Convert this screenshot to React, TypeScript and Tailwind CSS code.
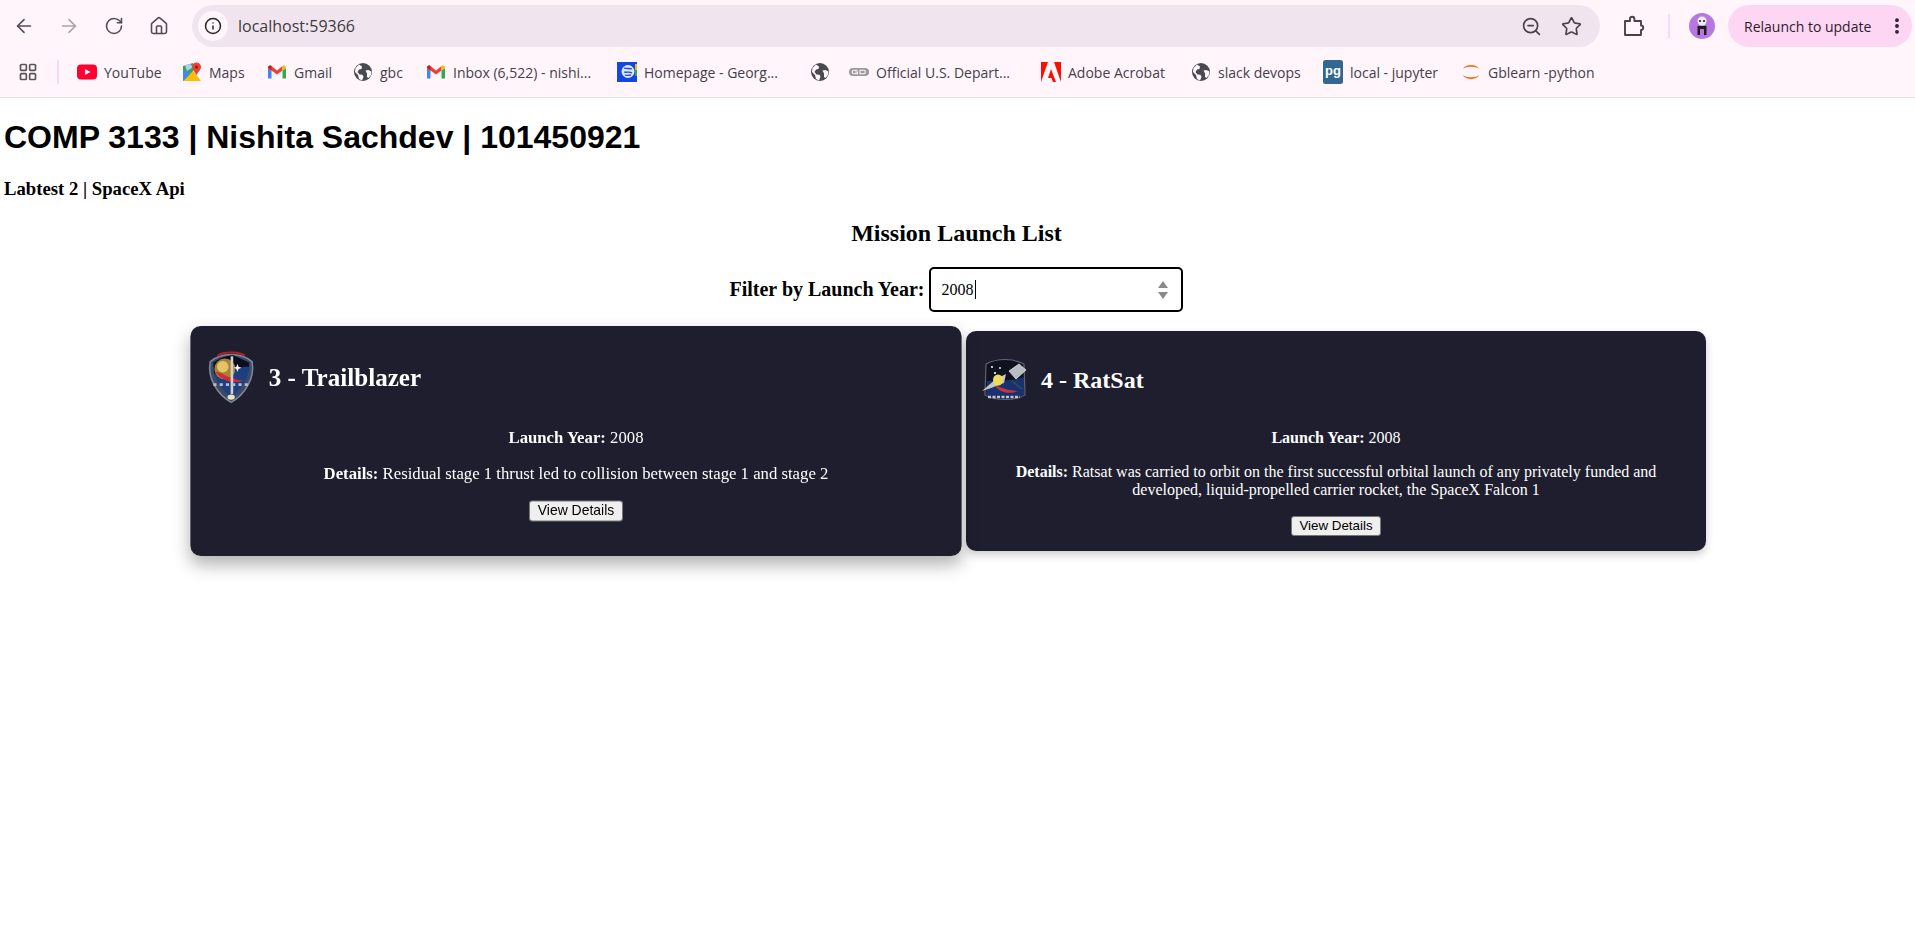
import { ArrowLeft, ArrowRight, RotateCw, Home, ZoomOut, Star, Info, LayoutGrid, MoreVertical } from 'lucide-react'

const chromeFont = "font-['Open_Sans','Noto_Sans',sans-serif]"

function Globe() {
  return (
    <svg width="20" height="20" viewBox="0 0 20 20">
      <circle cx="10" cy="10" r="9" fill="#474a4f" />
      <path d="M6 2.5 9 4.5 8.5 7 6 7.5 4.5 10 6.5 12.5 9.5 12.8 10.5 15 9 18.5 6 17 5 13 2 10 2.5 6Z" fill="#fff6fb" />
      <path d="M12.5 8.5 15.5 8 18.5 9.5 18 13 15.5 16 14 15 14 11.5Z" fill="#fff6fb" />
    </svg>
  )
}

function YouTube() {
  return (
    <svg width="20" height="20" viewBox="0 0 20 20">
      <rect x="0" y="2.5" width="20" height="15" rx="4" fill="#fe0032" />
      <path d="M8 7 13.5 10 8 13Z" fill="#fff" />
    </svg>
  )
}

function Maps() {
  return (
    <svg width="20" height="20" viewBox="0 0 20 20">
      <path d="M1 4 11 1 11 19 1 19Z" fill="#35a853" />
      <path d="M1 19 11 9 19 19Z" fill="#fbbc04" />
      <path d="M1 19 8 12 4 8 1 11Z" fill="#4285f4" />
      <path d="M3 3 8 2 11 5 5 9Z" fill="#aecbfa" />
      <path d="M14.5 0.5a4.5 4.5 0 0 1 4.5 4.5c0 3-3 4.5-4.5 8.5-1.5-4-4.500-5.500-4.500-8.500a4.500 4.500 0 0 1 4.500-4.500Z" fill="#ea4335" />
      <circle cx="14.500" cy="5" r="1.600" fill="#a31515" />
    </svg>
  )
}

function Gmail() {
  return (
    <svg width="20" height="20" viewBox="0 0 20 20">
      <path d="M1 6V16.500H4.500V8.500Z" fill="#4285f4" />
      <path d="M19 6V16.500H15.500V8.500Z" fill="#34a853" />
      <path d="M1 6C1 3.500 3 3 4.500 4L10 8.500 15.500 4 15.500 8.500 10 12.500 4.500 8.500 1 6Z" fill="#ea4335" />
      <path d="M15.500 4C17 3 19 3.500 19 6L15.500 8.500Z" fill="#fbbc04" />
      <path d="M1 6 4.500 8.500V4C3 3 1 3.500 1 6Z" fill="#c5221f" />
    </svg>
  )
}

function GeorgeBrown() {
  return (
    <svg width="20" height="20" viewBox="0 0 20 20">
      <rect width="20" height="20" fill="#1546e0" />
      <circle cx="11" cy="9.500" r="6.500" fill="#dbe6fb" />
      <path d="M7 6c3 1 5 0 8 1M7 10c3 1 5-1 8 1M8 13c2 1 4 0 6 0" stroke="#1546e0" strokeWidth="1.300" fill="none" />
      <rect x="18" y="2" width="2" height="6" fill="#f0b429" />
      <rect x="18" y="8" width="2" height="6" fill="#39a845" />
    </svg>
  )
}

function GdIcon() {
  return (
    <svg width="20" height="20" viewBox="0 0 20 20">
      <rect x="0" y="6" width="20" height="8" rx="4" fill="#9a9a9a" />
      <path d="M8.500 8.200H5a1.800 1.800 0 0 0 0 3.600h3.500V10H6" stroke="#fff6fb" strokeWidth="1.100" fill="none" />
      <path d="M11 8.200h3.500a1.800 1.800 0 0 1 0 3.600H11Z" stroke="#fff6fb" strokeWidth="1.100" fill="none" />
    </svg>
  )
}

function Adobe() {
  return (
    <svg width="20" height="20" viewBox="0 0 20 20">
      <path d="M0 0H7L0 20Z" fill="#fa0f00" />
      <path d="M13 0H20V20Z" fill="#fa0f00" />
      <path d="M10 7 15 20H12L10.500 16H7Z" fill="#fa0f00" />
    </svg>
  )
}

function Pg() {
  return (
    <svg width="20" height="24" viewBox="0 0 20 24">
      <rect width="20" height="24" rx="2.500" fill="#336791" />
      <text x="10" y="15" textAnchor="middle" fontSize="13" fontWeight="700" fill="#fff" fontFamily="Liberation Sans, sans-serif">pg</text>
    </svg>
  )
}

function Jupyter() {
  return (
    <svg width="20" height="20" viewBox="0 0 20 20">
      <path d="M2 7C4 1.500 16 1.500 18 7 15 4 5 4 2 7Z" fill="#f37726" />
      <path d="M2 13C4 18.500 16 18.500 18 13 15 16 5 16 2 13Z" fill="#f37726" />
    </svg>
  )
}

const bookmarks = [
  { icon: <YouTube />, label: 'YouTube', width: 'w-[56px]' },
  { icon: <Maps />, label: 'Maps', width: 'w-[36px]' },
  { icon: <Gmail />, label: 'Gmail', width: 'w-[37px]' },
  { icon: <Globe />, label: 'gbc', width: 'w-[24px]' },
  { icon: <Gmail />, label: 'Inbox (6,522) - nishi...', width: 'w-[142px]' },
  { icon: <GeorgeBrown />, label: 'Homepage - Georg...', width: 'w-[144px]' },
  { icon: <Globe />, label: '', width: 'w-0', extra: '-mr-[3px]' },
  { icon: <GdIcon />, label: 'Official U.S. Depart...', width: 'w-[143px]' },
  { icon: <Adobe />, label: 'Adobe Acrobat', width: 'w-[101px]' },
  { icon: <Globe />, label: 'slack devops', width: 'w-[83px]' },
  { icon: <Pg />, label: 'local - jupyter', width: 'w-[89px]' },
  { icon: <Jupyter />, label: 'Gblearn -python', width: 'w-[110px]' },
]

function Toolbar() {
  return (
    <div className={`${chromeFont} bg-[#fff5fb] border-b border-[#e6e1e5] h-[98px] text-[#45404a]`}>
      <div className="flex items-center h-[52px] pl-px">
        <div className="w-[45px] flex justify-center"><ArrowLeft size={22} strokeWidth={1.8} color="#5a4a55" /></div>
        <div className="w-[45px] flex justify-center"><ArrowRight size={22} strokeWidth={1.8} color="#aaa3a8" /></div>
        <div className="w-[45px] flex justify-center"><RotateCw size={20} strokeWidth={1.9} color="#5a4a55" /></div>
        <div className="w-[45px] flex justify-center"><Home size={20} strokeWidth={1.9} color="#5a4a55" /></div>
        <div className="ml-[11px] w-[1408px] h-[42px] rounded-full bg-[#f0e5ee] flex items-center pl-[6px] pr-[18px]">
          <div className="w-[30px] h-[30px] rounded-full bg-[#fff5fb] flex items-center justify-center">
            <Info size={18} strokeWidth={2} color="#2b2428" />
          </div>
          <span className="ml-[10px] text-[16px] text-[#3f3a40]">localhost:59366</span>
          <div className="ml-auto flex items-center gap-[19px]">
            <ZoomOut size={21} strokeWidth={1.9} color="#4a4248" />
            <Star size={21} strokeWidth={1.9} color="#4a4248" />
          </div>
        </div>
        <svg className="ml-[22px]" width="24" height="24" viewBox="0 0 24 24" fill="none" stroke="#4a4248" strokeWidth="1.900">
          <path d="M3 7H8V5a2.200 2.200 0 0 1 4.400 0V7H19V11.500a2.200 2.200 0 0 1 0 4.400V21H3V7Z" strokeLinejoin="round" />
        </svg>
        <div className="ml-[22px] w-[2px] h-[24px] bg-[#fdd6f3]" />
        <div className="ml-[19px] w-[26px] h-[26px] rounded-full bg-[#b678e0] flex items-center justify-center">
          <svg width="16" height="22" viewBox="0 0 16 22">
            <circle cx="8" cy="6" r="4.500" fill="#eeeeee" />
            <circle cx="6" cy="6" r="1.100" fill="#222" />
            <circle cx="10" cy="6" r="1.100" fill="#222" />
            <path d="M3.500 11H12.500V20H10V14H6V20H3.500Z" fill="#1d1d1d" />
          </svg>
        </div>
        <div className="ml-[13px] w-[184px] h-[42px] rounded-full bg-[#fdd6f3] flex items-center pl-[16px] text-[14px] text-[#2f1a2c] whitespace-nowrap">
          Relaunch to update
          <MoreVertical size={20} strokeWidth={2.600} color="#2f1a2c" className="ml-auto mr-[5px]" />
        </div>
      </div>
      <div className="flex items-center h-[40px]">
        <LayoutGrid size={20} strokeWidth={2} color="#5a5558" className="ml-[18px]" />
        <div className="ml-[19px] w-[2px] h-[24px] bg-[#fdd6f3]" />
        <div className="ml-[18px] flex items-center gap-[22px] text-[14px] whitespace-nowrap">
          {bookmarks.map((b, i) => (
            <div key={i} className={`flex items-center gap-[7px] ${b.extra ?? ''}`}>
              {b.icon}
              {b.label && <span className={`${b.width} block`}>{b.label}</span>}
            </div>
          ))}
        </div>
      </div>
    </div>
  )
}

function TrailblazerPatch() {
  return (
    <svg className="blur-[0.4px]" width="46" height="50" viewBox="0 0 46 50">
      <path d="M3 10C14 1 32 1 43 10 46 26 36 42 23 49 10 42 0 26 3 10Z" fill="#3c4a66" stroke="#7e8798" strokeWidth="1.500" />
      <path d="M6 11C16 4 30 4 40 11 42 22 34 36 23 44 12 36 4 22 6 11Z" fill="#1b3f80" />
      <path d="M6 11C14 5 23 4 25 4L40 11 40 15C30 14 26 20 7 22Z" fill="#0b0d1d" />
      <circle cx="17" cy="17" r="10" fill="#a98333" />
      <circle cx="15" cy="15" r="5.500" fill="#e5c468" />
      <path d="M8 20C15 20 22 28 35 28 24 32 14 28 8 20Z" fill="#d42a35" />
      <rect x="22.500" y="5" width="2.500" height="36" fill="#cfcfcf" />
      <path d="M29 12 30 15 33 16 30 17 29 20 28 17 25.500 16 28 15Z" fill="#f4f4f4" />
      <path d="M6 32H40" stroke="#b9bdc6" strokeWidth="2.500" strokeDasharray="3 3" />
      <ellipse cx="23" cy="44" rx="3.500" ry="2.500" fill="#eee6c0" />
      <path d="M10 4C18 0 28 0 36 4" stroke="#b01e28" strokeWidth="2" fill="none" />
    </svg>
  )
}

function RatSatPatch() {
  return (
    <svg className="blur-[0.3px]" width="46" height="46" viewBox="0 0 46 46">
      <path d="M4 7C15 1 31 1 42 7L43 38C32 44 14 44 3 38Z" fill="#10131f" stroke="#5e6472" strokeWidth="1.200" />
      <path d="M5 24C14 24 32 24 42 20L42 38C32 43 14 43 4 38Z" fill="#1a3170" />
      <circle cx="10" cy="10" r="1" fill="#fff" />
      <circle cx="13" cy="16" r="1.100" fill="#fff" />
      <circle cx="18" cy="11" r="0.900" fill="#fff" />
      <path d="M27 14 37 7 44 13 34 22Z" fill="#b9bcc0" stroke="#dfe1e4" strokeWidth="0.800" />
      <path d="M0 34 14 22 24 17 22 26 9 31Z" fill="#c9c9b8" />
      <ellipse cx="16" cy="23" rx="5" ry="5.500" fill="#eedc58" />
      <path d="M13 29C20 30 26 34 36 34 26 38 18 35 13 29Z" fill="#c9343f" />
      <path d="M30 24 40 32" stroke="#1f5e4c" strokeWidth="1.500" />
      <path d="M6 40H38" stroke="#c4c4c4" strokeWidth="2.500" strokeDasharray="3 1.500" />
    </svg>
  )
}

type Launch = { num: string; name: string; year: string; details: string; patch: React.ReactNode; hovered?: boolean }

const launches: Launch[] = [
  {
    num: '3',
    name: 'Trailblazer',
    year: '2008',
    details: 'Residual stage 1 thrust led to collision between stage 1 and stage 2',
    patch: <TrailblazerPatch />,
    hovered: true,
  },
  {
    num: '4',
    name: 'RatSat',
    year: '2008',
    details: 'Ratsat was carried to orbit on the first successful orbital launch of any privately funded and developed, liquid-propelled carrier rocket, the SpaceX Falcon 1',
    patch: <RatSatPatch />,
  },
]

function LaunchCard({ launch }: { launch: Launch }) {
  return (
    <div
      className={
        launch.hovered
          ? 'w-[738px] bg-[#1e1e2e] text-white rounded-[10px] px-[18px] pt-[26px] pb-[15px] scale-[1.045] shadow-[0_8px_16px_rgba(0,0,0,0.3)]'
          : 'w-[740px] bg-[#1e1e2e] text-white rounded-[10px] px-[18px] pt-[26px] pb-[15px] shadow-[0_4px_8px_rgba(0,0,0,0.2)]'
      }
    >
      <div className="flex items-center gap-[13px] h-[46px] -ml-[2px]">
        {launch.patch}
        <h2 className="text-[24px] font-bold">{launch.num} - {launch.name}</h2>
      </div>
      <p className="mt-[26px] text-center text-[16px] leading-[18px]"><strong>Launch Year:</strong> {launch.year}</p>
      <p className="mt-[16px] text-center text-[16px] leading-[18px]"><strong>Details:</strong> {launch.details}</p>
      <div className="mt-[17px] flex justify-center">
        <button className="h-[20px] px-[7px] bg-[#efefef] border border-[#767676] rounded-[3px] text-[13.33px] leading-none text-black font-['Liberation_Sans',sans-serif]">View Details</button>
      </div>
    </div>
  )
}

export default function App() {
  return (
    <div className="min-h-[925px] bg-white font-['Liberation_Serif',serif] text-black">
      <Toolbar />
      <h1 className="mt-[21px] ml-[4px] text-[32px] leading-[37px] font-bold font-['Liberation_Sans',sans-serif]">COMP 3133 | Nishita Sachdev | 101450921</h1>
      <h3 className="mt-[22px] ml-[4px] text-[18.72px] leading-[21px] font-bold">Labtest 2 | SpaceX Api</h3>
      <h2 className="mt-[21px] pr-[2px] text-center text-[24px] leading-[27px] font-bold">Mission Launch List</h2>
      <div className="mt-[20px] pr-[3px] flex items-center justify-center gap-[4px]">
        <label className="text-[20px] leading-[23px] font-bold">Filter by Launch Year:</label>
        <div className="relative w-[254px] h-[45px] border-2 border-black rounded-[5px] flex items-center pl-[11px] text-[16px]">
          2008
          <span className="ml-px w-px h-[19px] bg-black" />
          <svg className="absolute right-[12px] top-[11px]" width="12" height="20" viewBox="0 0 12 20">
            <path d="M6 1 11 8H1Z" fill="#8a8a8a" />
            <path d="M6 19 11 12H1Z" fill="#8a8a8a" />
          </svg>
        </div>
      </div>
      <div className="mt-[19px] pr-[2px] flex justify-center gap-[21px]">
        {launches.map((l) => (
          <LaunchCard key={l.num} launch={l} />
        ))}
      </div>
    </div>
  )
}
